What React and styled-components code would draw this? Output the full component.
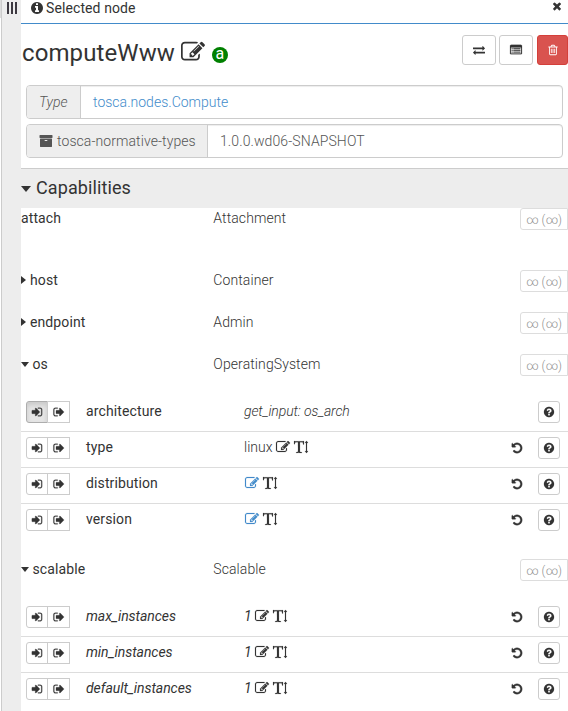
import React from 'react';
import styled, { createGlobalStyle, css } from 'styled-components';

const GlobalStyle = createGlobalStyle`
  *, *::before, *::after { box-sizing: border-box; }
  body {
    margin: 0;
    overflow: hidden;
    background: #fff;
    color: #333;
    font-family: Roboto, "Liberation Sans", sans-serif;
    font-size: 14px;
    font-weight: 300;
    line-height: 20px;
    letter-spacing: 0.1px;
  }
`;

const PATHS = {
  info: 'M1152 1376v-160q0-14-9-23t-23-9h-96v-512q0-14-9-23t-23-9h-320q-14 0-23 9t-9 23v160q0 14 9 23t23 9h96v320h-96q-14 0-23 9t-9 23v160q0 14 9 23t23 9h448q14 0 23-9t9-23zm-128-896v-160q0-14-9-23t-23-9h-192q-14 0-23 9t-9 23v160q0 14 9 23t23 9h192q14 0 23-9t9-23zm640 416q0 209-103 385.5t-279.5 279.5-385.5 103-385.5-103-279.5-279.5-103-385.5 103-385.5 279.5-279.5 385.5-103 385.5 103 279.5 279.5 103 385.5z',
  help: 'M1024 1376v-192q0-14-9-23t-23-9h-192q-14 0-23 9t-9 23v192q0 14 9 23t23 9h192q14 0 23-9t9-23zm256-672q0-88-55.5-163t-138.5-116-170-41q-243 0-371 213-15 24 8 42l132 100q7 6 19 6 16 0 25-12 53-68 86-92 34-24 86-24 48 0 85.5 26t37.5 59q0 38-20 61t-68 45q-63 28-115.5 86.5t-52.5 125.5v36q0 14 9 23t23 9h192q14 0 23-9t9-23q0-19 21.5-49.5t54.5-49.5q32-18 49-28.5t46-35 44.5-48 28-60.5 12.5-81zm384 192q0 209-103 385.5t-279.5 279.5-385.5 103-385.5-103-279.5-279.5-103-385.5 103-385.5 279.5-279.5 385.5-103 385.5 103 279.5 279.5 103 385.5z',
  close: 'M1490 1322q0 40-28 68l-136 136q-28 28-68 28t-68-28l-294-294-294 294q-28 28-68 28t-68-28l-136-136q-28-28-28-68t28-68l294-294-294-294q-28-28-28-68t28-68l136-136q28-28 68-28t68 28l294 294 294-294q28-28 68-28t68 28l136 136q28 28 28 68t-28 68l-294 294 294 294q28 28 28 68z',
  edit: 'M888 1184l116-116-152-152-116 116v56h96v96h56zm440-720q-16-16-33 1l-350 350q-17 17-1 33t33-1l350-350q17-17 1-33zm80 594v190q0 119-84.5 203.5t-203.5 84.5h-832q-119 0-203.5-84.5t-84.5-203.5v-832q0-119 84.5-203.5t203.5-84.5h832q63 0 117 25 15 7 18 23 3 17-9 29l-49 49q-14 14-32 8-23-6-45-6h-832q-66 0-113 47t-47 113v832q0 66 47 113t113 47h832q66 0 113-47t47-113v-126q0-13 9-22l64-64q15-15 35-7t20 29zm-96-738l288 288-672 672h-288v-288zm444 132l-92 92-288-288 92-92q28-28 68-28t68 28l152 152q28 28 28 68t-28 68z',
  signIn: 'M1312 896q0 26-19 45l-544 544q-19 19-45 19t-45-19-19-45v-288h-448q-26 0-45-19t-19-45v-384q0-26 19-45t45-19h448v-288q0-26 19-45t45-19 45 19l544 544q19 19 19 45zm352-352v704q0 119-84.5 203.5t-203.5 84.5h-320q-13 0-22.5-9.5t-9.5-22.5q0-4-1-20t-.5-26.5 3-23.5 10-19.5 20.5-6.5h320q66 0 113-47t47-113v-704q0-66-47-113t-113-47h-312l-11.5-1-11.5-3-8-5.5-7-9-2-13.5q0-4-1-20t-.5-26.5 3-23.5 10-19.5 20.5-6.5h320q119 0 203.5 84.5t84.5 203.5z',
  signOut: 'M704 1440q0 4 1 20t.5 26.5-3 23.5-10 19.5-20.5 6.5h-320q-119 0-203.5-84.5t-84.5-203.5v-704q0-119 84.5-203.5t203.5-84.5h320q13 0 22.5 9.5t9.5 22.5q0 4 1 20t.5 26.5-3 23.5-10 19.5-20.5 6.5h-320q-66 0-113 47t-47 113v704q0 66 47 113t113 47h312l11.5 1 11.5 3 8 5.5 7 9 2 13.5zm928-544q0 26-19 45l-544 544q-19 19-45 19t-45-19-19-45v-288h-448q-26 0-45-19t-19-45v-384q0-26 19-45t45-19h448v-288q0-26 19-45t45-19 45 19l544 544q19 19 19 45z',
  trash: 'M704 736v576q0 14-9 23t-23 9h-64q-14 0-23-9t-9-23v-576q0-14 9-23t23-9h64q14 0 23 9t9 23zm256 0v576q0 14-9 23t-23 9h-64q-14 0-23-9t-9-23v-576q0-14 9-23t23-9h64q14 0 23 9t9 23zm256 0v576q0 14-9 23t-23 9h-64q-14 0-23-9t-9-23v-576q0-14 9-23t23-9h64q14 0 23 9t9 23zm128 724v-948h-896v948q0 22 7 40.5t14.5 27 10.5 8.5h832q3 0 10.5-8.5t14.5-27 7-40.5zm-672-1076h448l-48-117q-7-9-17-11h-317q-10 2-17 11zm928 32v64q0 14-9 23t-23 9h-96v948q0 83-47 143.5t-113 60.5h-832q-66 0-113-58.5t-47-141.5v-952h-96q-14 0-23-9t-9-23v-64q0-14 9-23t23-9h309l70-167q15-37 54-63t79-26h320q40 0 79 26t54 63l70 167h309q14 0 23 9t9 23z',
  undo: 'M1664 896q0 156-61 298t-164 245-245 164-298 61q-172 0-327-72.5t-264-204.5q-7-10-6.5-22.5t8.5-20.5l137-138q10-9 25-9 16 2 23 12 73 95 179 147t225 52q104 0 198.5-40.5t163.5-109.5 109.5-163.5 40.5-198.5-40.5-198.5-109.5-163.5-163.5-109.5-198.5-40.5q-98 0-188 35.5t-160 101.5l137 138q31 30 14 69-17 40-59 40h-448q-26 0-45-19t-19-45v-448q0-42 40-59 39-17 69 14l130 129q107-101 244.5-156.5t284.5-55.5q156 0 298 61t245 164 164 245 61 298z',
  textHeight: 'M1744 1408q33 0 42 18.5t-11 44.5l-126 162q-20 26-49 26t-49-26l-126-162q-20-26-11-44.5t42-18.5h80v-1024h-80q-33 0-42-18.5t11-44.5l126-162q20-26 49-26t49 26l126 162q20 26 11 44.5t-42 18.5h-80v1024h80zm-1663-1279l54 27q12 5 211 5 44 0 132-2t132-2q36 0 107.5.5t107.5.5h293q6 0 21 .5t20.5 0 16-3 17.5-9 15-17.5l42-1q4 0 14 .5t14 .5q2 112 2 336 0 80-5 109-39 14-68 18-25-44-54-128-3-9-11-48t-14.5-73.5-7.5-35.5q-6-8-12-12.5t-15.5-6-13-2.5-18-.5-16.5.5q-17 0-66.5-.5t-74.5-.5-64 2-71 6q-9 81-8 136 0 94 2 388t2 455q0 16-2.5 71.5t0 91.5 12.5 69q40 21 124 42.5t120 37.5q5 40 5 50 0 14-3 29l-34 1q-76 2-218-8t-207-10q-50 0-151 9t-152 9q-3-51-3-52v-9q17-27 61.5-43t98.5-29 78-27q19-42 19-383 0-101-3-303t-3-303v-117q0-2 .5-15.5t.5-25-1-25.5-3-24-5-14q-11-12-162-12-33 0-93 12t-80 26q-19 13-34 72.5t-31.5 111-42.5 53.5q-42-26-56-44v-383z',
  archive: 'M1088 832q0-26-19-45t-45-19h-256q-26 0-45 19t-19 45 19 45 45 19h256q26 0 45-19t19-45zm576-192v960q0 26-19 45t-45 19h-1408q-26 0-45-19t-19-45v-960q0-26 19-45t45-19h1408q26 0 45 19t19 45zm64-448v256q0 26-19 45t-45 19h-1536q-26 0-45-19t-19-45v-256q0-26 19-45t45-19h1536q26 0 45 19t19 45z',
  exchange: 'M1792 1184v192q0 13-9.5 22.5t-22.5 9.5h-1376v192q0 13-9.5 22.5t-22.5 9.5q-12 0-24-10l-319-320q-9-9-9-22 0-14 9-23l320-320q9-9 23-9 13 0 22.5 9.5t9.5 22.5v192h1376q13 0 22.5 9.5t9.5 22.5zm0-544q0 14-9 23l-320 320q-9 9-23 9-13 0-22.5-9.5t-9.5-22.5v-192h-1376q-13 0-22.5-9.5t-9.5-22.5v-192q0-13 9.5-22.5t22.5-9.5h1376v-192q0-14 9-23t23-9q12 0 24 10l319 319q9 9 9 23z',
  listAlt: 'M256 640h128v128h-128zM256 896h128v128h-128zM256 1152h128v128h-128zM512 640h1024v128h-1024zM512 896h1024v128h-1024zM512 1152h1024v128h-1024zM160 128h1472q66 0 113 47t47 113v1088q0 66-47 113t-113 47h-1472q-66 0-113-47t-47-113v-1088q0-66 47-113t113-47zM160 512q-32 0-32 32v832q0 32 32 32h1472q32 0 32-32v-832q0-32-32-32z',
};

const Svg = styled.svg`
  display: block;
  flex: none;
  width: ${(p) => p.$size}px;
  height: ${(p) => p.$size}px;
  fill: currentColor;
  stroke: currentColor;
  stroke-width: ${(p) => p.$weight};
`;

const Icon = ({ name, size = 14, weight = 0 }) => (
  <Svg $size={size} $weight={weight} viewBox="0 0 1792 1792" overflow="visible" aria-hidden="true">
    <path d={PATHS[name]} fillRule={name === 'listAlt' ? 'evenodd' : 'nonzero'} />
  </Svg>
);

const Layout = styled.div`
  display: flex;
  width: 568px;
  height: 711px;
  overflow: hidden;
`;

const ScrollEdge = styled.div`
  flex: none;
  width: 1px;
  height: 18px;
  background: #ddd;
`;

const ResizeBar = styled.div`
  flex: none;
  width: 20px;
  padding: 2px 0 0 5px;
  background: #ededed;
  border-left: 1px solid #ccc;
`;

const Grip = styled.div`
  width: 10px;
  height: 12px;
  border: solid #3c3840;
  border-width: 0 2px;
  background: linear-gradient(#3c3840, #3c3840) center / 2px 100% no-repeat;
`;

const Panel = styled.main`
  flex: none;
  width: 547px;
  overflow: hidden;
`;

const PanelHeader = styled.header`
  display: flex;
  align-items: flex-start;
  height: 24px;
  padding: 0 5px 0 9px;
  border-bottom: 1px solid #428bca;
  font-weight: 400;
  line-height: 16px;
`;

const HeaderIcon = styled.span`
  padding: ${(p) => (p.$close ? '0' : '1px 2px 0 0')};
  margin-left: ${(p) => (p.$close ? 'auto' : '0')};
`;

const TitleRow = styled.div`
  display: flex;
  align-items: flex-start;
  height: 61px;
  padding: 11px 0 0 1px;
`;

const Title = styled.h1`
  margin: 3px 6px 0 0;
  font-size: 24px;
  font-weight: 400;
  line-height: 30px;
`;

const TitleEdit = styled.span`
  padding-top: 5px;
`;

const AbstractBadge = styled.span`
  width: 16px;
  height: 16px;
  margin: 12px 0 0 7px;
  border-radius: 50%;
  background: #008000;
  color: #fff;
  font-size: 16px;
  line-height: 14px;
  text-align: center;
  font-weight: 400;
`;

const Actions = styled.div`
  display: flex;
  gap: 3px;
  margin-left: auto;
`;

const ActionButton = styled.button`
  display: flex;
  align-items: center;
  justify-content: center;
  width: 34px;
  height: 30px;
  padding: 0;
  border: 1px solid #ccc;
  border-radius: 3px;
  background: #fff;
  color: #333;
  ${(p) =>
    p.$danger &&
    css`
      width: 31px;
      margin-left: 1px;
      border-color: #d43f3a;
      background: #d9534f;
      color: #fff;
    `}
`;

const FieldList = styled.div`
  display: flex;
  flex-direction: column;
  gap: 5px;
  height: 83px;
  padding: 0 5px;
`;

const InputGroup = styled.div`
  display: flex;
  height: 34px;
  border: 1px solid #ccc;
  border-radius: 4px;
  overflow: hidden;
  box-shadow: inset 0 1px 1px rgba(0, 0, 0, 0.075);
`;

const Addon = styled.div`
  display: flex;
  align-items: center;
  gap: 4px;
  width: ${(p) => p.$width}px;
  padding-left: 12px;
  border-right: 1px solid #ccc;
  background: #eee;
  color: #555;
  font-style: ${(p) => (p.$italic ? 'italic' : 'normal')};
  letter-spacing: ${(p) => (p.$italic ? '0' : '0.08px')};
`;

const FieldValue = styled.div`
  padding: 6px 12px;
  color: ${(p) => (p.$link ? '#428bca' : '#555')};
  letter-spacing: ${(p) => (p.$link ? '0.02px' : '0.1px')};
`;

const SectionHeader = styled.h2`
  display: flex;
  align-items: center;
  gap: 5px;
  height: 40px;
  margin: 0;
  padding-bottom: 1px;
  border-top: 1px solid #ccc;
  background: #ededed;
  font-size: 18px;
  font-weight: 400;
`;

const Caret = styled.span`
  flex: none;
  margin-top: ${(p) => (p.$open ? 1 : 0)}px;
  border: ${(p) => p.$size}px solid transparent;
  ${(p) =>
    p.$open
      ? css`
          border-top: ${p.$size + 1}px solid #333;
          border-bottom: 0;
        `
      : css`
          border-left: 5px solid #333;
          border-right: 0;
        `}
`;

const CapabilityRow = styled.div`
  display: flex;
  align-items: flex-start;
  height: ${(p) => (p.$tall ? 62 : 42)}px;
`;

const CapabilityName = styled.div`
  display: flex;
  align-items: center;
  gap: ${(p) => (p.$open ? 3.5 : 4)}px;
  width: 192px;
  font-weight: 400;
`;

const CapabilityType = styled.span`
  padding-left: 0.3px;
`;

const RelationButton = styled.button`
  width: 48px;
  height: 22px;
  margin-left: auto;
  padding: 1px 0 0;
  border: 1px solid #ddd;
  border-radius: 3px 0 0 3px;
  background: #fff;
  color: #909090;
  font: 300 12px/18px Roboto, sans-serif;
  letter-spacing: 0;
`;

const PropertyList = styled.div`
  height: ${(p) => p.$height}px;
`;

const PropertyRow = styled.div`
  display: flex;
  align-items: flex-start;
  height: 36px;
  padding: 5px 8px 0 5px;
  border-bottom: 1px solid #ddd;
  &:last-child { border-bottom: 0; }
`;

const SmallButton = styled.button`
  display: flex;
  align-items: center;
  justify-content: center;
  width: 22px;
  height: 22px;
  padding: 0;
  border: 1px solid #ccc;
  border-radius: 3px;
  background: #fff;
  color: #333;
`;

const InputButton = styled(SmallButton)`
  border-radius: 3px 0 0 3px;
  ${(p) =>
    p.$active &&
    css`
      border-color: #adadad;
      background: #e6e6e6;
      box-shadow: inset 0 3px 5px rgba(0, 0, 0, 0.125);
    `}
`;

const OutputButton = styled(SmallButton)`
  width: 23px;
  margin-left: -1px;
  border-radius: 0;
`;

const PropertyName = styled.div`
  width: 158px;
  margin-left: 16px;
  font-weight: 400;
  font-style: ${(p) => (p.$italic ? 'italic' : 'normal')};
  letter-spacing: ${(p) => (p.$italic ? '-0.06px' : '0.12px')};
`;

const PropertyValue = styled.div`
  display: flex;
  align-items: center;
  gap: 4px;
  height: 20px;
  font-style: ${(p) => (p.$italic ? 'italic' : 'normal')};
  letter-spacing: ${(p) => (p.$italic ? '-0.1px' : '0')};
`;

const ValueText = styled.span`
  margin-right: -0.5px;
  font-weight: ${(p) => (p.$strong ? 400 : 300)};
`;

const EditMark = styled.span`
  padding-left: ${(p) => (p.$empty ? 0.5 : 0)}px;
  color: ${(p) => (p.$empty ? '#428bca' : '#333')};
`;

const RowTools = styled.div`
  display: flex;
  align-items: center;
  gap: 15px;
  margin-left: auto;
`;

const OS_PROPERTIES = [
  { name: 'architecture', value: 'get_input: os_arch', fromInput: true },
  { name: 'type', value: 'linux' },
  { name: 'distribution' },
  { name: 'version' },
];

const SCALABLE_PROPERTIES = [
  { name: 'max_instances', value: '1', italic: true },
  { name: 'min_instances', value: '1', italic: true },
  { name: 'default_instances', value: '1', italic: true },
];

const Capability = ({ name, type, open, tall, plain }) => (
  <CapabilityRow $tall={tall}>
    <CapabilityName $open={open}>
      {!plain && <Caret $open={open} $size={4} />}
      {name}
    </CapabilityName>
    <CapabilityType>{type}</CapabilityType>
    <RelationButton>∞ (∞)</RelationButton>
  </CapabilityRow>
);

const Property = ({ name, value, fromInput, italic }) => (
  <PropertyRow>
    <InputButton $active={fromInput} aria-label="Input"><Icon name="signIn" size={12} weight={40} /></InputButton>
    <OutputButton aria-label="Output"><Icon name="signOut" size={12} weight={40} /></OutputButton>
    <PropertyName $italic={italic}>{name}</PropertyName>
    <PropertyValue $italic={italic || fromInput}>
      {value && <ValueText $strong={italic}>{value}</ValueText>}
      {!fromInput && (
        <>
          <EditMark $empty={!value}><Icon name="edit" weight={20} /></EditMark>
          <Icon name="textHeight" weight={20} />
        </>
      )}
    </PropertyValue>
    <RowTools>
      {!fromInput && <Icon name="undo" size={12} weight={60} />}
      <SmallButton aria-label="Help"><Icon name="help" size={12} weight={10} /></SmallButton>
    </RowTools>
  </PropertyRow>
);

export default function App() {
  return (
    <Layout>
      <GlobalStyle />
      <ScrollEdge />
      <ResizeBar><Grip /></ResizeBar>
      <Panel>
        <PanelHeader>
          <HeaderIcon><Icon name="info" /></HeaderIcon>
          Selected node
          <HeaderIcon $close><Icon name="close" size={12} /></HeaderIcon>
        </PanelHeader>
        <TitleRow>
          <Title>computeWww</Title>
          <TitleEdit><Icon name="edit" size={24} /></TitleEdit>
          <AbstractBadge>a</AbstractBadge>
          <Actions>
            <ActionButton aria-label="Replace"><Icon name="exchange" size={12} /></ActionButton>
            <ActionButton aria-label="Details"><Icon name="listAlt" size={12} weight={30} /></ActionButton>
            <ActionButton $danger aria-label="Delete"><Icon name="trash" size={12} /></ActionButton>
          </Actions>
        </TitleRow>
        <FieldList>
          <InputGroup>
            <Addon $width={54} $italic>Type</Addon>
            <FieldValue $link>tosca.nodes.Compute</FieldValue>
          </InputGroup>
          <InputGroup>
            <Addon $width={181}><Icon name="archive" />tosca-normative-types</Addon>
            <FieldValue>1.0.0.wd06-SNAPSHOT</FieldValue>
          </InputGroup>
        </FieldList>
        <SectionHeader><Caret $open $size={5} />Capabilities</SectionHeader>
        <Capability name="attach" type="Attachment" tall plain />
        <Capability name="host" type="Container" />
        <Capability name="endpoint" type="Admin" />
        <Capability name="os" type="OperatingSystem" open />
        <PropertyList $height={163}>
          {OS_PROPERTIES.map((p) => <Property key={p.name} {...p} />)}
        </PropertyList>
        <Capability name="scalable" type="Scalable" open />
        <PropertyList $height={110}>
          {SCALABLE_PROPERTIES.map((p) => <Property key={p.name} {...p} />)}
        </PropertyList>
      </Panel>
    </Layout>
  );
}
